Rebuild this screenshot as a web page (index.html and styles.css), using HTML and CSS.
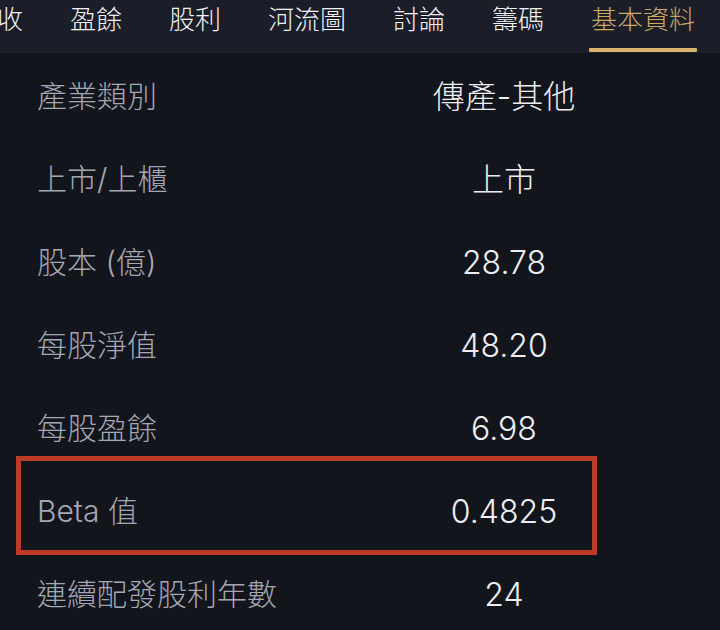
FILE: index.html
```html
<!DOCTYPE html>
<html lang="zh-Hant">
<head>
<meta charset="utf-8">
<title>基本資料</title>
<link rel="stylesheet" href="styles.css">
</head>
<body>
<div class="page">
  <nav class="tabs">
    <div class="tab"><span class="tab-label">收</span></div>
    <div class="tab"><span class="tab-label">盈餘</span></div>
    <div class="tab"><span class="tab-label">股利</span></div>
    <div class="tab"><span class="tab-label">河流圖</span></div>
    <div class="tab"><span class="tab-label">討論</span></div>
    <div class="tab"><span class="tab-label">籌碼</span></div>
    <div class="tab tab-active"><span class="tab-label">基本資料</span><span class="tab-indicator"></span></div>
  </nav>
  <main class="info">
    <div class="row"><span class="label">產業類別</span><span class="value">傳產-其他</span></div>
    <div class="row"><span class="label">上市/上櫃</span><span class="value">上市</span></div>
    <div class="row"><span class="label">股本 (億)</span><span class="value">28.78</span></div>
    <div class="row"><span class="label">每股淨值</span><span class="value">48.20</span></div>
    <div class="row"><span class="label">每股盈餘</span><span class="value">6.98</span></div>
    <div class="row"><span class="label">Beta 值</span><span class="value">0.4825</span></div>
    <div class="row"><span class="label">連續配發股利年數</span><span class="value">24</span></div>
    <div class="highlight"></div>
  </main>
</div>
</body>
</html>
```
FILE: styles.css
```css
html, body {
  margin: 0;
  padding: 0;
  background: #13151c;
}
body {
  width: 720px;
  height: 630px;
  overflow: hidden;
  font-family: Inter, "Noto Sans CJK TC", sans-serif;
}
.page {
  width: 720px;
  height: 630px;
  overflow: hidden;
  background: #13151c;
}
.tabs {
  display: flex;
  gap: 47px;
  height: 53px;
  background: #1b1d29;
  overflow: hidden;
}
.tab {
  display: flex;
  flex-direction: column;
  align-items: stretch;
  flex: none;
}
.tab:first-child {
  margin-left: -3px;
}
.tab-label {
  font-family: "Noto Sans CJK TC", sans-serif;
  font-size: 26px;
  font-weight: 300;
  line-height: 35px;
  color: #f2f2f4;
  white-space: nowrap;
}
.tab-active .tab-label {
  color: #cda864;
}
.tab-indicator {
  display: block;
  height: 4px;
  margin: 13px -2px 0;
  background: #dbb46e;
  border-radius: 1px;
}
.info {
  position: relative;
  padding-top: 2px;
}
.row {
  display: grid;
  grid-template-columns: 363px 208px;
  padding-left: 37px;
  height: 83px;
  align-items: center;
}
.label {
  font-size: 30px;
  font-weight: 300;
  line-height: 83px;
  color: #a4a7b3;
  white-space: nowrap;
}
.value {
  font-size: 32px;
  font-weight: 300;
  line-height: 83px;
  color: #eeeef2;
  text-align: center;
  white-space: nowrap;
}
.highlight {
  position: absolute;
  left: 16px;
  top: 403px;
  width: 581px;
  height: 99px;
  box-sizing: border-box;
  border: 5px solid #bd3a28;
}
```
